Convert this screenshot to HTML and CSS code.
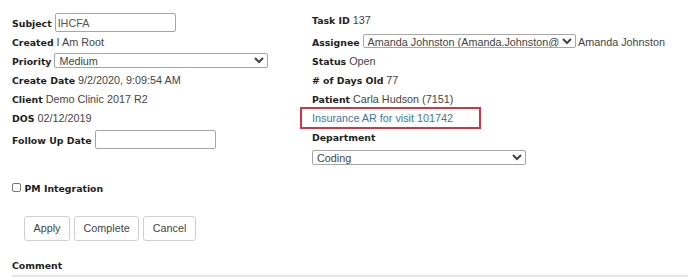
FILE: index.html
```html
<!DOCTYPE html>
<html lang="en">
<head>
    <meta charset="UTF-8">
    <meta name="viewport" content="width=device-width, initial-scale=1.0">
    <title>Task Details</title>
    <link rel="stylesheet" href="styles.css">
</head>
<body>
    <div class="task-form">
        <div class="task-grid">
            <div class="col">
                <div class="field field-first"><span class="label">Subject</span> <input type="text" class="text-input" value="IHCFA"></div>
                <div class="field"><span class="label">Created</span> I Am Root</div>
                <div class="field"><span class="label">Priority</span> <select class="select"><option>Medium</option></select></div>
                <div class="field"><span class="label">Create Date</span> 9/2/2020, 9:09:54 AM</div>
                <div class="field"><span class="label">Client</span> Demo Clinic 2017 R2</div>
                <div class="field"><span class="label">DOS</span> 02/12/2019</div>
                <div class="field field-follow"><span class="label">Follow Up Date</span> <input type="text" class="text-input"></div>
            </div>
            <div class="col">
                <div class="field field-task"><span class="label">Task ID</span> 137</div>
                <div class="field"><span class="label">Assignee</span> <select class="select select-assignee"><option>Amanda Johnston (Amanda.Johnston@MedicalClinic.com)</option></select> Amanda Johnston</div>
                <div class="field"><span class="label">Status</span> Open</div>
                <div class="field"><span class="label"># of Days Old</span> 77</div>
                <div class="field"><span class="label">Patient</span> Carla Hudson (7151)</div>
                <div class="flagged"><a href="#" class="visit-link">Insurance AR for visit 101742</a></div>
                <div class="field field-dept"><span class="label">Department</span></div>
                <select class="select select-dept"><option>Coding</option></select>
            </div>
        </div>

        <div class="field pm-row">
            <input type="checkbox" class="check" id="pm-integration"><label for="pm-integration" class="label">PM Integration</label>
        </div>

        <div class="actions">
            <button class="btn">Apply</button>
            <button class="btn">Complete</button>
            <button class="btn">Cancel</button>
        </div>

        <div class="field comment-row"><span class="label">Comment</span></div>
        <div class="comment-box"></div>
    </div>
</body>
</html>
```

FILE: styles.css
```css
* {
    margin: 0;
    padding: 0;
    box-sizing: border-box;
}

body {
    font-family: 'Liberation Sans', Arial, sans-serif;
    font-size: 10.8px;
    line-height: 19px;
    color: #444;
    background: #fff;
}

.task-form {
    padding: 11px 0 0 12px;
}

.task-grid {
    display: grid;
    grid-template-columns: 300px 1fr;
}

.col {
    display: flex;
    flex-direction: column;
}

.field {
    white-space: nowrap;
}

.label {
    font-family: 'DejaVu Sans', Verdana, sans-serif;
    font-weight: bold;
    font-size: 9.35px;
    color: #1e1e1e;
}

.field-first {
    margin-top: 2px;
    height: 20px;
}

.field-follow {
    margin-top: 2px;
    height: 20px;
}

.field-task {
    height: 21.5px;
}

.text-input {
    width: 121px;
    height: 19px;
    border: 1px solid #a6a6a6;
    border-radius: 2px;
    padding: 1px 2px;
    font-family: 'Liberation Sans', Arial, sans-serif;
    font-size: 10.8px;
    color: #555;
    background: #fff;
}

.select {
    width: 214px;
    height: 15px;
    border: 1px solid #a6a6a6;
    border-radius: 2px;
    padding: 0;
    font-family: 'Liberation Sans', Arial, sans-serif;
    font-size: 10.8px;
    color: #444;
    background: #fff;
}

.select-assignee {
    width: 213px;
    height: 14px;
}

.select-dept {
    display: block;
    margin-top: 3px;
}

.flagged {
    width: 181px;
    height: 22.3px;
    margin: -1.8px 0 -1.5px -12px;
    padding-left: 10px;
    border: 2px solid #d9343f;
    line-height: 18px;
}

.visit-link {
    color: #3c77a2;
    text-decoration: none;
}

.pm-row {
    margin-top: 14px;
}

.check {
    appearance: none;
    width: 9px;
    height: 9px;
    margin-right: 3.5px;
    border: 1px solid #777;
    border-radius: 2px;
    background: #fff;
    vertical-align: baseline;
}

.actions {
    display: flex;
    gap: 4px;
    margin: 18px 0 0 12px;
}

.btn {
    height: 25px;
    padding: 0 8.5px;
    border: 1px solid #d0d0d0;
    border-radius: 3px;
    background: #fff;
    font-family: 'Liberation Sans', Arial, sans-serif;
    font-size: 10.8px;
    color: #444;
}

.comment-row {
    margin-top: 15px;
}

.comment-box {
    height: 20px;
    border-top: 2px solid #e6e6e6;
}
```
